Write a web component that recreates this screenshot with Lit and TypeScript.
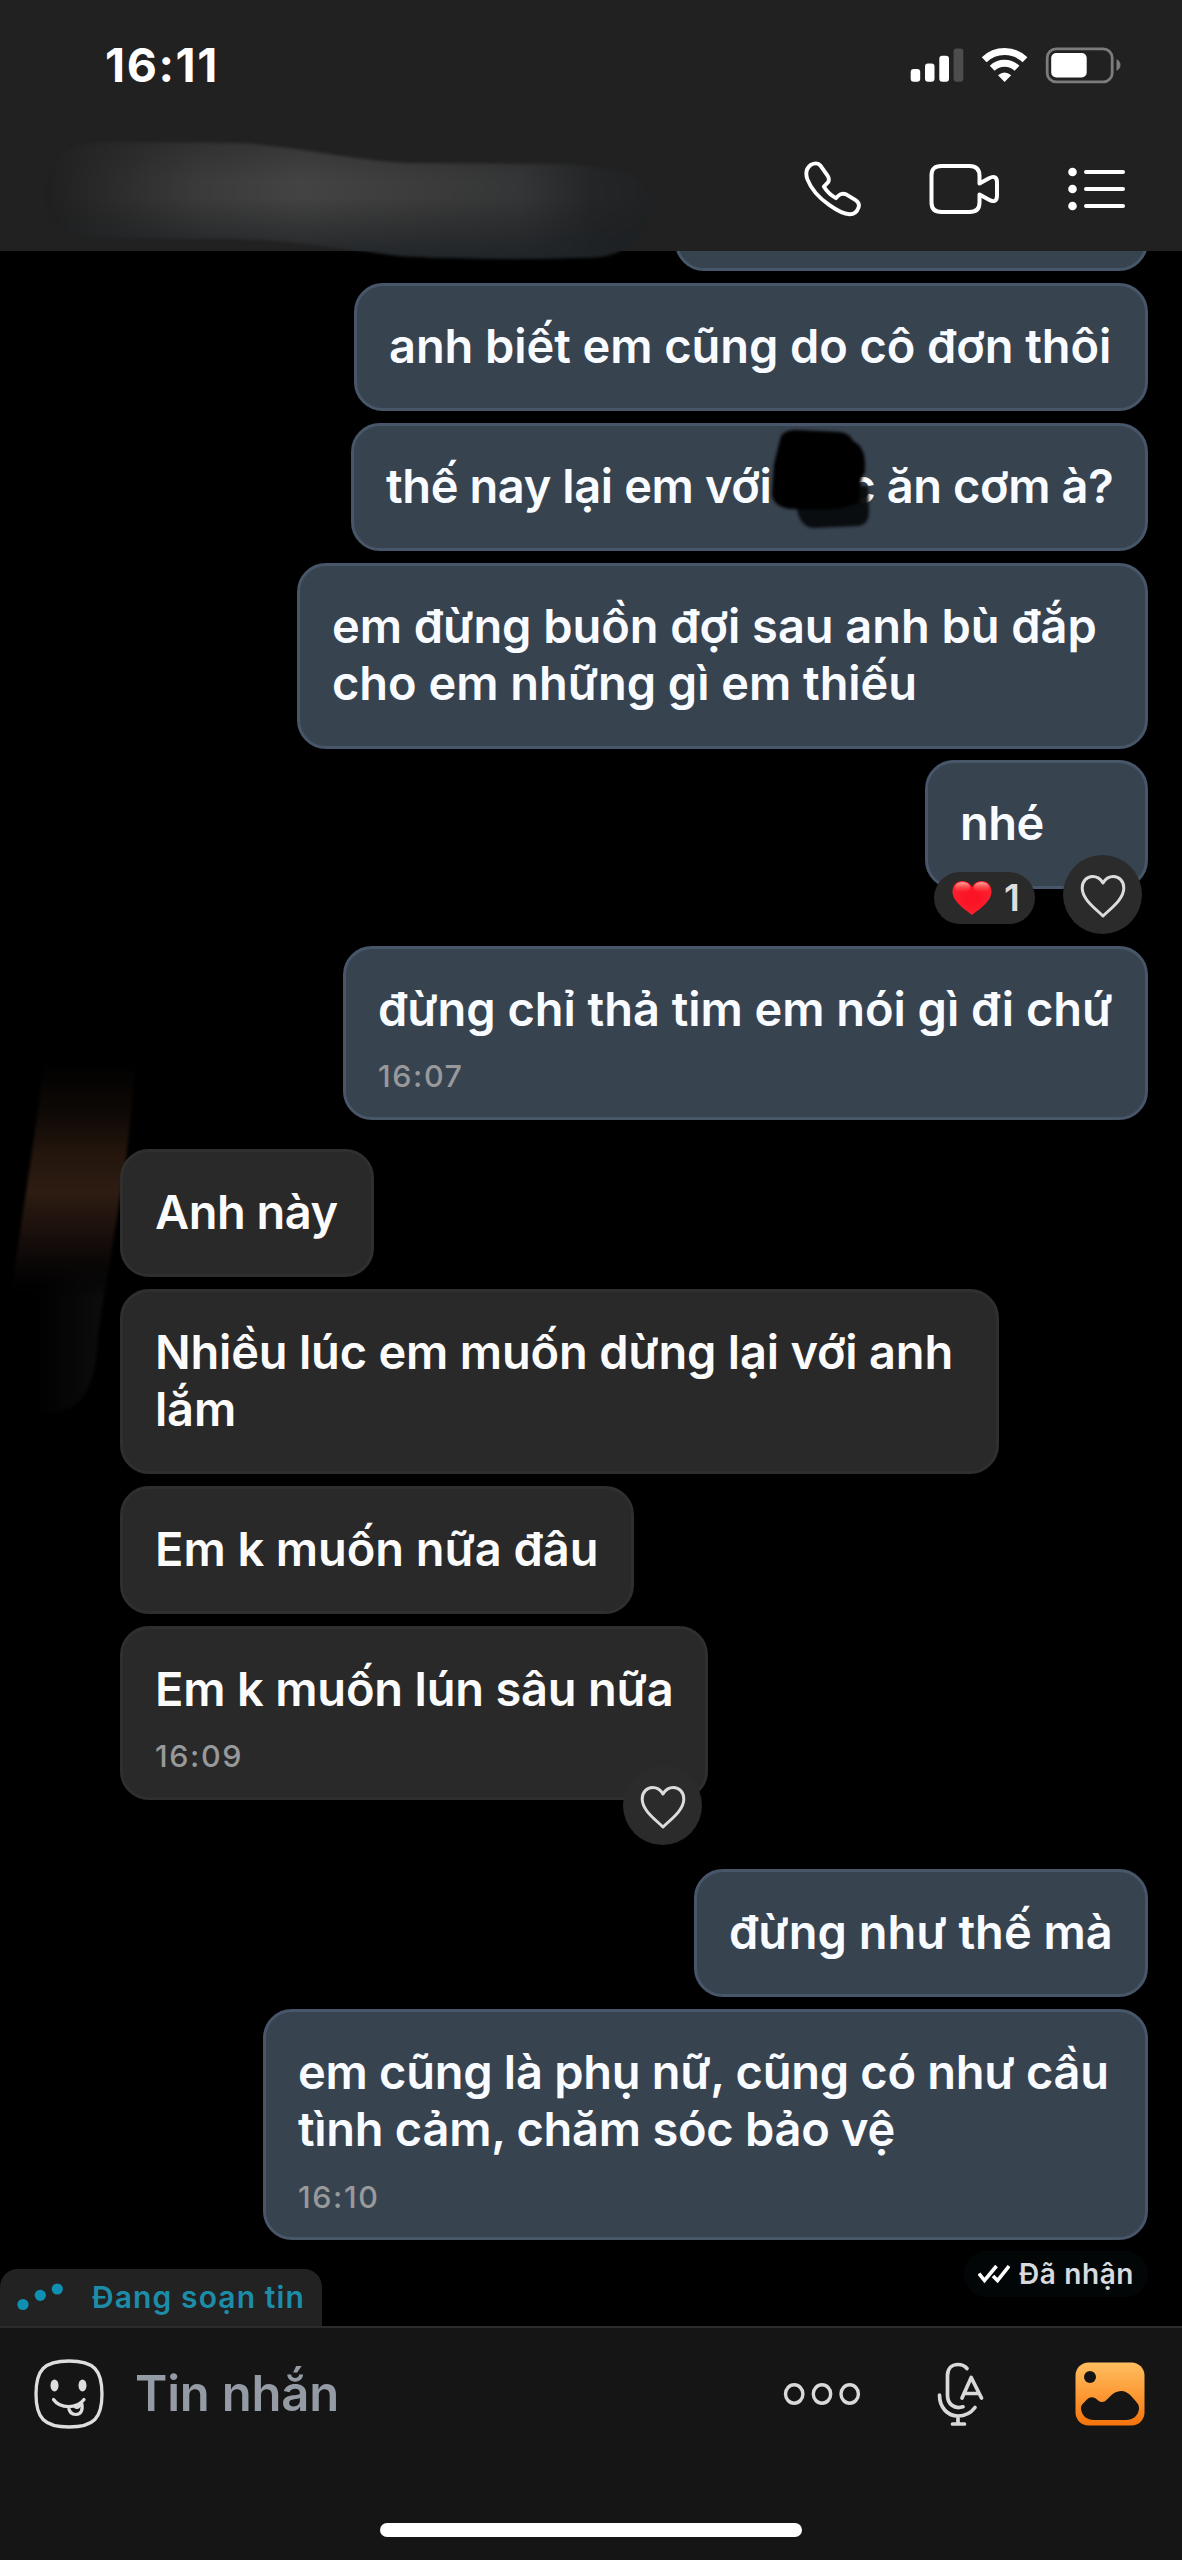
import { LitElement, html, css, nothing } from "lit";
import { customElement, property } from "lit/decorators.js";
import { classMap } from "lit/directives/class-map.js";
import { styleMap } from "lit/directives/style-map.js";

interface Message {
  mine: boolean;
  lines: string[];
  width: number;
  gap: number;
  tracking?: number;
  time?: string;
  hearts?: number;
  likeable?: boolean;
  censored?: boolean;
}

const MESSAGES: Message[] = [
  { mine: true, lines: [""], width: 473, gap: 0 },
  { mine: true, lines: ["anh biết em cũng do cô đơn thôi"], width: 794, gap: 11.7, tracking: -0.08 },
  { mine: true, lines: ["thế nay lại em với", "c ăn cơm à?"], width: 797, gap: 11.7, censored: true, tracking: -0.4 },
  { mine: true, lines: ["em đừng buồn đợi sau anh bù đắp", "cho em những gì em thiếu"], width: 851, gap: 11.7, tracking: -0.05 },
  { mine: true, lines: ["nhé"], width: 223, gap: 11.7, hearts: 1, likeable: true },
  { mine: true, lines: ["đừng chỉ thả tim em nói gì đi chứ"], width: 805, gap: 57.4, time: "16:07", tracking: -0.05 },
  { mine: false, lines: ["Anh này"], width: 254, gap: 28.8 },
  { mine: false, lines: ["Nhiều lúc em muốn dừng lại với anh", "lắm"], width: 879, gap: 11.7, tracking: -0.2 },
  { mine: false, lines: ["Em k muốn nữa đâu"], width: 514, gap: 11.7, tracking: -0.07 },
  { mine: false, lines: ["Em k muốn lún sâu nữa"], width: 588, gap: 11.7, time: "16:09", likeable: true, tracking: -0.2 },
  { mine: true, lines: ["đừng như thế mà"], width: 454, gap: 69, tracking: 0 },
  { mine: true, lines: ["em cũng là phụ nữ, cũng có như cầu", "tình cảm, chăm sóc bảo vệ"], width: 885, gap: 11.7, time: "16:10", tracking: -0.28 },
];

@customElement("chat-bubble")
class ChatBubble extends LitElement {
  @property({ attribute: false }) message!: Message;

  static styles = css`
    :host { display: block; position: relative; }
    .bubble {
      box-sizing: border-box;
      position: relative;
      border: 3px solid #2f2f2f;
      border-radius: 29px;
      background: #292929;
      color: #fbfbfb;
      padding: 31px 0 33.9px 32px;
      font: 600 47px/57.4px Inter, "Noto Sans", sans-serif;
      letter-spacing: -0.5px;
      white-space: nowrap;
    }
    .mine { background: #384350; border-color: #48566a; color: #f8fbff; }
    .line { height: 57.4px; }
    .time {
      height: 45.6px;
      padding-top: 21px;
      box-sizing: border-box;
      font-size: 30.5px;
      font-weight: 500;
      line-height: 36px;
      letter-spacing: 1.6px;
      color: #98999b;
    }
    .hidden { display: inline-block; width: 77px; }
    .ink { position: absolute; left: 407px; top: 0; width: 130px; height: 120px; }
    .count {
      position: absolute; left: 6px; bottom: -38px;
      box-sizing: border-box;
      width: 101px; height: 52px; border-radius: 26px;
      background: #2a2a2a;
      display: flex; align-items: center; gap: 12px; padding-left: 18px;
      font-size: 37.5px; line-height: 52px; color: #dedede;
    }
    .like {
      position: absolute; right: 3px; bottom: -48.5px;
      width: 79px; height: 79px; border-radius: 50%;
      background: #2b2b2b;
      display: flex; align-items: center; justify-content: center;
    }
    svg { display: block; flex: none; }
  `;

  private body(m: Message) {
    if (m.censored) {
      return html`<div class="line">${m.lines[0]}<span class="hidden"></span>${m.lines[1]}</div>
        <svg class="ink" viewBox="0 0 130 120">
          <defs>
            <filter id="soft" x="-20%" y="-20%" width="140%" height="140%" color-interpolation-filters="sRGB"><feGaussianBlur stdDeviation="1.8" /></filter>
          </defs>
          <g filter="url(#soft)">
            <path d="M33 72 L37 88 Q41 101 52 102 L98 100 Q108 98 108 86 L107 60 L80 60 Z" fill="#090b0d" fill-opacity=".97" />
            <path d="M20 10 Q25 3 36 4 L78 6 Q89 7 92 15 Q103 20 104 36 L104 46 Q99 52 97 76 Q84 86 36 83 L28 83 Q12 80 11 68 L13 38 Z" fill="#000" />
            <path d="M90 44 H100 V78 H90 Z" fill="#000" fill-opacity=".6" />
          </g>
        </svg>`;
    }
    return m.lines.map((l) => html`<div class="line">${l}</div>`);
  }

  render() {
    const m = this.message;
    return html`<div
      class=${classMap({ bubble: true, mine: m.mine })}
      style=${styleMap({ width: `${m.width}px`, letterSpacing: m.tracking === undefined ? null : `${m.tracking}px` })}
    >
      ${this.body(m)}
      ${m.time ? html`<div class="time">${m.time}</div>` : nothing}
      ${m.hearts
        ? html`<div class="count">
            <svg width="40" height="36" viewBox="0 0 40 36">
              <defs>
                <radialGradient id="shine" cx=".5" cy=".5" r=".62">
                  <stop offset=".3" stop-color="#fb1426" /><stop offset="1" stop-color="#fb2632" />
                </radialGradient>
                <linearGradient id="gloss" x1="0" y1="0" x2="0" y2="1">
                  <stop offset="0" stop-color="#ffb0a4" stop-opacity=".95" /><stop offset="1" stop-color="#ff4038" stop-opacity="0" />
                </linearGradient>
              </defs>
              <path d="M20 35 C14 30 .5 22 .5 11.500 C.5 5 5 1 10.500 1 C14.500 1 18 3 20 7 C22 3 25.500 1 29.500 1 C35 1 39.500 5 39.500 11.500 C39.500 22 26 30 20 35 Z" fill="url(#shine)" />
              <ellipse cx="10.500" cy="7.500" rx="7.500" ry="5.500" fill="url(#gloss)" />
              <ellipse cx="29.500" cy="7.500" rx="7.500" ry="5.500" fill="url(#gloss)" />
            </svg>
            <span>${m.hearts}</span>
          </div>`
        : nothing}
      ${m.likeable
        ? html`<div class="like">
            <svg width="46" height="46" viewBox="0 0 46 46" fill="none" stroke="#dcdcdc" stroke-width="3" stroke-linejoin="round">
              <path d="M23 44 C16 37 2.200 27.500 2.200 16 C2.200 9 7 4.500 12.500 4.500 C17 4.500 20.500 6.500 23 11 C25.500 6.500 29 4.500 33.500 4.500 C39 4.500 43.800 9 43.800 16 C43.800 27.500 30 37 23 44 Z" />
            </svg>
          </div>`
        : nothing}
    </div>`;
  }
}

@customElement("chat-header")
class ChatHeader extends LitElement {
  static styles = css`
    :host { display: block; position: relative; z-index: 2; height: 251px; background: #212121; }
    .status {
      display: flex; justify-content: space-between; align-items: center;
      height: 129px; padding: 0 60px 0 105px;
      color: #fff; font: 750 46.500px/54px Inter, sans-serif; letter-spacing: 1.600px;
    }
    .actions { display: flex; justify-content: flex-end; align-items: center; gap: 68px; height: 119px; padding-right: 56px; }
    .call { margin-right: -1.500px; }
    .smudge { position: absolute; left: 0; top: 130px; }
    svg { display: block; }
  `;

  render() {
    return html`
      <div class="status">
        <span>16:11</span>
        <svg width="212" height="38" viewBox="0 0 212 38">
          <g fill="#fff">
            <rect x="0.700" y="23" width="9.500" height="12.800" rx="3" />
            <rect x="15" y="17.500" width="9.500" height="18.300" rx="3" />
            <rect x="29.300" y="9.800" width="9.700" height="26" rx="3" />
          </g>
          <rect x="43.600" y="2.500" width="9.700" height="33.300" rx="3" fill="#4d4d4d" />
          <g fill="none" stroke="#fff">
            <path d="M74.200 13.800 A29.500 29.500 0 0 1 115 13.800" stroke-width="7" />
            <path d="M82.200 22.200 A18 18 0 0 1 107 22.200" stroke-width="7" />
          </g>
          <path d="M94.600 36 L88 29.300 Q94.600 23.500 101.200 29.300 Z" fill="#fff" />
          <rect x="137.200" y="2.900" width="65" height="33" rx="9" fill="none" stroke="#7c7c7c" stroke-width="2.800" />
          <rect x="141.200" y="7" width="35.500" height="24.500" rx="5" fill="#fff" />
          <path d="M206.500 13 Q210.500 15.500 210.500 19 Q210.500 22.500 206.500 25 Z" fill="#7c7c7c" />
        </svg>
      </div>
      <div class="actions">
        <svg class="call" width="58" height="56" viewBox="1 1 60 58" fill="none" stroke="#fff" stroke-width="4" stroke-linejoin="round" stroke-linecap="round">
          <path d="M13.500 3.500 C15.500 3.500 17 4.500 18.200 6 L25.500 16.500 C27.300 19.200 27 21.500 25.500 23.500 L21.500 27.500 C24.500 32.500 28.500 36.500 34 39.500 L36.500 37 C39 34.500 42 34.300 45 35.800 L54 41.300 C57.500 43.500 58.500 46 57.500 49 C56 53.500 52.500 56.300 48 56.200 C42 56 34 51.500 27 46.500 C17 39.500 8 29 4.500 20 C2 13 4 8 8 5 C10 3.800 11.500 3.500 13.500 3.500 Z" />
        </svg>
        <svg width="72" height="54" viewBox="0 0 72 54" fill="none" stroke="#fff" stroke-width="4" stroke-linejoin="round">
          <path d="M51.500 21.500 V14 C51.500 7 48 4 41.500 4 H13.500 C6.500 4 3.500 7 3.500 13.500 V40.500 C3.500 47 7 50 13.500 50 H41.500 C48 50 51.500 47 51.500 40.500 V32.500 L61 37.800 C66 40.500 69 39 69 33.500 V20.500 C69 15 66 13.500 61 16.200 Z" />
        </svg>
        <svg width="58" height="54" viewBox="0 0 58 54" stroke="#fff" stroke-width="4" stroke-linecap="round">
          <g fill="#fff" stroke="none"><circle cx="4.500" cy="10" r="4.300" /><circle cx="4.500" cy="27" r="4.300" /><circle cx="4.500" cy="44" r="4.300" /></g>
          <path d="M18 10 H55 M18 27 H55 M18 44 H55" />
        </svg>
      </div>
      <svg class="smudge" width="680" height="140" viewBox="0 130 680 140">
        <defs>
          <linearGradient id="across" gradientUnits="userSpaceOnUse" x1="45" y1="0" x2="655" y2="0">
            <stop offset="0" stop-color="#1f1f1f" /><stop offset=".08" stop-color="#282828" /><stop offset=".25" stop-color="#3a3a3a" />
            <stop offset=".42" stop-color="#434343" /><stop offset=".6" stop-color="#3c3c3c" /><stop offset=".78" stop-color="#343536" />
            <stop offset=".9" stop-color="#232527" /><stop offset="1" stop-color="#1f2122" />
          </linearGradient>
          <linearGradient id="top" gradientUnits="userSpaceOnUse" x1="0" y1="140" x2="0" y2="180">
            <stop offset="0" stop-color="#212121" stop-opacity=".4" /><stop offset="1" stop-color="#212121" stop-opacity="0" />
          </linearGradient>
          <linearGradient id="down" gradientUnits="userSpaceOnUse" x1="0" y1="198" x2="0" y2="255">
            <stop offset="0" stop-color="#1a1b1c" stop-opacity="0" /><stop offset="1" stop-color="#1c2125" stop-opacity=".8" />
          </linearGradient>
          <filter id="edge" color-interpolation-filters="sRGB"><feGaussianBlur stdDeviation="1.500" /></filter>
          <clipPath id="shape"><path d="M46 190 C48 160 62 142 110 142 L240 143 C300 147 340 158 405 163 L560 164 C630 166 650 180 650 200 C648 235 630 252 600 257 C540 260 460 259 400 256 C340 248 290 239 220 239 L95 237 C60 235 44 215 46 190 Z" /></clipPath>
        </defs>
        <g filter="url(#edge)">
          <g clip-path="url(#shape)">
            <rect x="30" y="130" width="640" height="140" fill="url(#across)" />
            <rect x="30" y="130" width="640" height="140" fill="url(#top)" />
            <rect x="30" y="130" width="640" height="140" fill="url(#down)" />
          </g>
        </g>
      </svg>
    `;
  }
}

@customElement("chat-composer")
class ChatComposer extends LitElement {
  static styles = css`
    :host { display: flex; flex-direction: column; align-items: center; height: 234px; box-sizing: border-box; background: #151515; border-top: 2px solid #2c2c2c; }
    .row { display: flex; align-items: center; width: 100%; height: 131px; box-sizing: border-box; padding: 0 37px 0 34px; }
    .placeholder { flex: 1; margin-left: 31px; padding-top: 1px; color: #949ba4; font: 600 49px/60px Inter, sans-serif; letter-spacing: -0.2px; }
    .more { margin-right: 76px; }
    .mic { margin-right: 91px; }
    .home { width: 422px; height: 14px; border-radius: 7px; background: #fff; margin-top: 64px; }
    svg { display: block; flex: none; }
  `;

  render() {
    return html`
      <div class="row">
        <svg width="70" height="70" viewBox="0 0 70 70" fill="none" stroke="#dedede" stroke-width="3.300" stroke-linecap="round">
          <path d="M35 2 C60 2 68 11 68 35 C68 59 60 68 35 68 C10 68 2 59 2 35 C2 11 10 2 35 2 Z" />
          <g fill="#dedede" stroke="none"><ellipse cx="20.500" cy="26.500" rx="4" ry="6" /><ellipse cx="48.500" cy="26.500" rx="4" ry="6" /></g>
          <path d="M19.500 40.500 C26 50 43 50 50 40.500 M34.500 47.500 C35 53 38 55.500 42 55.500 C47 55.500 49.500 51 47.500 43.500 M41 47.500 C42.500 49 44.500 48.500 45 47" stroke-width="3.200" />
        </svg>
        <span class="placeholder">Tin nhắn</span>
        <svg class="more" width="78" height="24" viewBox="0 0 78 24" fill="none" stroke="#d9d9d9" stroke-width="3.400">
          <ellipse cx="11.200" cy="12" rx="8.700" ry="9.200" /><ellipse cx="39" cy="12" rx="8.700" ry="9.200" /><ellipse cx="66.700" cy="12" rx="8.700" ry="9.200" />
        </svg>
        <svg class="mic" width="47" height="64" viewBox="0 0 47 64" fill="none" stroke="#d9d9d9" stroke-width="3.700" stroke-linecap="round" stroke-linejoin="round">
          <path d="M30 6.500 C27.500 3.500 24.500 2.500 21 2.500 C14.500 2.500 10.500 7 10.500 13.500 V33 C10.500 42 17 47.500 26 44.800" />
          <path d="M2.500 33 C2.500 46 11 54 21 54 C28 54 33.500 51.500 38 45.500 M21 54 V62 M15.500 62 H27.500" />
          <path d="M25 36 L34.200 15.500 L44.500 36 M28.500 31.500 H41.500" />
        </svg>
        <svg width="70" height="64" viewBox="0 0 70 64">
          <defs>
            <linearGradient id="sun" x1="0" y1="0" x2="0" y2="1">
              <stop offset="0" stop-color="#ffbf60" /><stop offset=".5" stop-color="#fd9a36" /><stop offset="1" stop-color="#f4730c" />
            </linearGradient>
          </defs>
          <rect x=".5" y=".5" width="69" height="63" rx="13" fill="url(#sun)" />
          <circle cx="15" cy="15" r="6" fill="#151515" />
          <path d="M6 47 C6 43 7.500 42 10 39.500 C14 34.500 18 34 22 37.500 C27 42 30 40 34 35.500 C42 27 50 27 57 35 L61 39.500 C63 42 64 43 64 47 C63 54 58 58 51 58 H19 C12 58 7 54 6 47 Z" fill="#151515" />
        </svg>
      </div>
      <div class="home"></div>
    `;
  }
}

@customElement("app-root")
class AppRoot extends LitElement {
  static styles = css`
    :host { display: flex; flex-direction: column; width: 1182px; height: 2560px; background: #000; overflow: hidden; }
    .chat { position: relative; flex: 1; min-height: 0; box-sizing: border-box; overflow: hidden; }
    .list { display: flex; flex-direction: column; position: relative; padding: 0 34px 0 120px; margin-top: -108px; }
    .out { align-self: flex-end; }
    .in { align-self: flex-start; }
    .receipt {
      display: flex; align-items: center; gap: 9px; align-self: flex-end;
      box-sizing: border-box; width: 184px; height: 46px; margin-top: 11px; padding-left: 14px;
      border-radius: 23px; background: #020607; color: #d9dadd;
      font: 600 28px/36px Inter, sans-serif; letter-spacing: 0.6px; white-space: nowrap;
    }
    .flare { position: absolute; left: 0; top: 789px; }
    .typing {
      position: absolute; left: 0; bottom: 0; display: flex; align-items: center; gap: 29px;
      box-sizing: border-box; width: 322px; height: 57px; padding: 0 0 2px 17px;
      border-radius: 18px 18px 0 0; background: #222; color: #1c8ca8;
      font: 600 30px/50px Inter, sans-serif; letter-spacing: 1.100px; white-space: nowrap;
    }
    svg { display: block; flex: none; }
  `;

  render() {
    return html`
      <chat-header></chat-header>
      <div class="chat">
        <svg class="flare" width="150" height="400" viewBox="0 1040 150 400">
          <defs>
            <linearGradient id="warm" gradientUnits="userSpaceOnUse" x1="0" y1="1060" x2="0" y2="1300">
              <stop offset="0" stop-color="#000" /><stop offset=".22" stop-color="#0e0906" /><stop offset=".4" stop-color="#24160d" />
              <stop offset=".55" stop-color="#2d1c12" /><stop offset=".68" stop-color="#1e120d" /><stop offset=".85" stop-color="#0a0606" /><stop offset="1" stop-color="#000" stop-opacity="0" />
            </linearGradient>
            <linearGradient id="cold" gradientUnits="userSpaceOnUse" x1="35" y1="0" x2="95" y2="0">
              <stop offset="0" stop-color="#000" /><stop offset="1" stop-color="#0b0b0b" />
            </linearGradient>
            <filter id="haze" color-interpolation-filters="sRGB"><feGaussianBlur stdDeviation="1.500" /></filter>
          </defs>
          <g filter="url(#haze)">
            <path d="M112 1245 L98 1335 Q96 1395 70 1408 Q50 1415 35 1410 V1270 Z" fill="url(#cold)" />
            <path d="M45 1060 L137 1060 L126 1160 L104 1300 L10 1300 L30 1165 Z" fill="url(#warm)" />
          </g>
        </svg>
        <div class="list">
          ${MESSAGES.map(
            (m) => html`<chat-bubble class=${m.mine ? "out" : "in"} style=${styleMap({ marginTop: `${m.gap}px` })} .message=${m}></chat-bubble>`
          )}
          <div class="receipt">
            <svg width="32" height="20" viewBox="0 0 32 20" fill="none" stroke="#fff" stroke-width="3.600">
              <path d="M1 9.500 L6.500 16.500 L18.500 2 M15 12 L19.500 16.500 L31 2" />
            </svg>
            <span>Đã nhận</span>
          </div>
        </div>
        <div class="typing">
          <svg width="46" height="28" viewBox="0 0 46 28" fill="#0f90b2">
            <circle cx="6" cy="21.500" r="5.600" /><circle cx="23.300" cy="12.300" r="5.600" /><circle cx="40.300" cy="6" r="5.600" />
          </svg>
          <span>Đang soạn tin</span>
        </div>
      </div>
      <chat-composer></chat-composer>
    `;
  }
}
